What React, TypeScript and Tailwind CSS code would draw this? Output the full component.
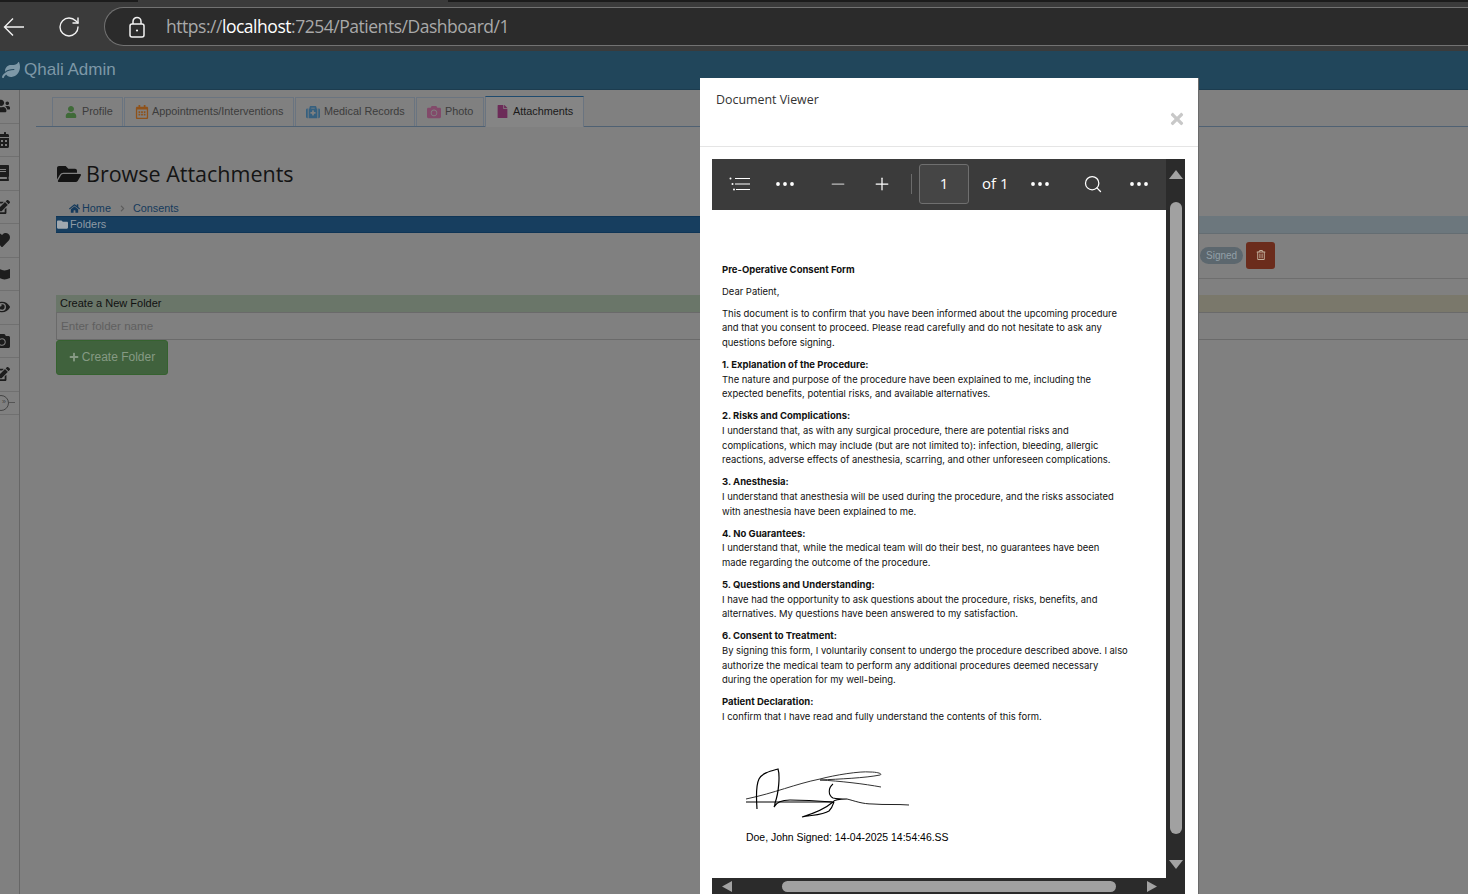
import { RotateCw, Minus, Plus, Search, Ellipsis } from "lucide-react";
import {
  FaLeaf, FaUser, FaUsers, FaRegCalendarAlt, FaCalendarAlt, FaMedkit, FaCamera, FaFile, FaFolderOpen, FaFolder,
  FaHome, FaPlus, FaRegTrashAlt, FaTimes, FaEdit, FaHeart, FaEye, FaBook, FaChevronRight,
} from "react-icons/fa";

function MapBlob({ className }: { className?: string }) {
  return (
    <svg viewBox="0 0 16 16" className={className} fill="currentColor">
      <path d="M0 4 C3 2 5 3 8 4 C11 5 13 4 16 3 V12 C13 13 11 14 8 13 C5 12 3 11 0 13 Z" />
    </svg>
  );
}

const tabs = [
  { label: "Profile", icon: FaUser, color: "text-[#3f6a38]", cls: "w-[71px] pl-[12px]", iconCls: "mr-[5px] size-[12px]" },
  { label: "Appointments/Interventions", icon: FaRegCalendarAlt, color: "text-[#8f521a]", cls: "w-[170px] pl-[10px]", iconCls: "mr-[3px] size-[14px]" },
  { label: "Medical Records", icon: FaMedkit, color: "text-[#36607f]", cls: "w-[120px] pl-[10px]", iconCls: "mr-[4px] size-[14px]" },
  { label: "Photo", icon: FaCamera, color: "text-[#824a6a]", cls: "w-[68px] pl-[10px]", iconCls: "mr-[4px] size-[14px]" },
];

const sideIcons = [FaUsers, FaCalendarAlt, FaBook, FaEdit, FaHeart, MapBlob, FaEye, FaCamera, FaEdit];

type Para = { heading?: string; lines: string[] };

const paragraphs: Para[] = [
  { lines: ["Dear Patient,"] },
  {
    lines: [
      "This document is to confirm that you have been informed about the upcoming procedure",
      "and that you consent to proceed. Please read carefully and do not hesitate to ask any",
      "questions before signing.",
    ],
  },
  {
    heading: "1. Explanation of the Procedure:",
    lines: [
      "The nature and purpose of the procedure have been explained to me, including the",
      "expected benefits, potential risks, and available alternatives.",
    ],
  },
  {
    heading: "2. Risks and Complications:",
    lines: [
      "I understand that, as with any surgical procedure, there are potential risks and",
      "complications, which may include (but are not limited to): infection, bleeding, allergic",
      "reactions, adverse effects of anesthesia, scarring, and other unforeseen complications.",
    ],
  },
  {
    heading: "3. Anesthesia:",
    lines: [
      "I understand that anesthesia will be used during the procedure, and the risks associated",
      "with anesthesia have been explained to me.",
    ],
  },
  {
    heading: "4. No Guarantees:",
    lines: [
      "I understand that, while the medical team will do their best, no guarantees have been",
      "made regarding the outcome of the procedure.",
    ],
  },
  {
    heading: "5. Questions and Understanding:",
    lines: [
      "I have had the opportunity to ask questions about the procedure, risks, benefits, and",
      "alternatives. My questions have been answered to my satisfaction.",
    ],
  },
  {
    heading: "6. Consent to Treatment:",
    lines: [
      "By signing this form, I voluntarily consent to undergo the procedure described above. I also",
      "authorize the medical team to perform any additional procedures deemed necessary",
      "during the operation for my well-being.",
    ],
  },
  {
    heading: "Patient Declaration:",
    lines: ["I confirm that I have read and fully understand the contents of this form."],
  },
];

function BrowserBar() {
  return (
    <div className="flex h-[51px] shrink-0 flex-col bg-[#3b3b3b]">
      <div className="flex h-[2px] shrink-0">
        <div className="w-[138px] bg-[#1c1c1c]" />
        <div className="ml-[310px] flex-1 bg-[#1c1c1c]" />
      </div>
      <div className="flex flex-1 items-center pb-[1px] pl-[3px] pt-[1px]">
        <svg viewBox="0 0 22 20" className="h-[20px] w-[22px] text-[#f2f2f2]" fill="none" stroke="currentColor" strokeWidth="1.4">
          <path d="M21 10H1.5M10 1.5L1.5 10L10 18.5" />
        </svg>
        <RotateCw className="ml-[32px] size-[24px] text-[#f2f2f2]" strokeWidth={1.4} />
        <div className="ml-[23px] flex h-[39px] flex-1 items-center rounded-l-[20px] border border-r-0 border-[#727272] bg-[#2b2b2b] pl-[24px] font-['Open_Sans',sans-serif] text-[17.5px] tracking-[-0.47px] text-[#a9a9a9]">
          <svg viewBox="0 0 16 22" className="h-[22px] w-[16px] text-[#f2f2f2]" fill="none" stroke="currentColor" strokeWidth="1.5">
            <path d="M4 8V5.5C4 3.2 5.8 1.5 8 1.5C10.2 1.5 12 3.2 12 5.5V8" />
            <rect x="1" y="8" width="14" height="13" rx="2" />
            <circle cx="8" cy="14.5" r="1.1" fill="currentColor" stroke="none" />
          </svg>
          <span className="ml-[21px]">
            https://<span className="text-white">localhost</span>:7254/Patients/Dashboard/1
          </span>
        </div>
      </div>
    </div>
  );
}

function Sidebar() {
  return (
    <div className="w-[20px] shrink-0 overflow-hidden border-r border-[#666]">
      {sideIcons.map((Icon, i) => (
        <div key={i} className="flex h-[33.5px] items-center border-b border-[#707070]">
          <Icon className={i === 0 ? "ml-[-8px] size-[18px] shrink-0 text-[#1d1d1d]" : "ml-[-6px] size-[16px] shrink-0 text-[#1d1d1d]"} />
        </div>
      ))}
      <div className="flex h-[23px] items-center border-b border-[#707070]">
        <div className="ml-[-7px] flex size-[16px] shrink-0 items-center justify-center rounded-full border border-[#444] pl-[6px] text-[7px] text-[#444]">»</div>
        <div className="h-px w-[6px] bg-[#555]" />
      </div>
    </div>
  );
}

function Tabs() {
  return (
    <div className="ml-[16px] mt-[7px] flex h-[30px] items-end gap-px border-b border-[#4f6173] pl-[16px]">
      {tabs.map(t => (
        <div key={t.label} className={`flex h-[29px] items-center border border-b-0 border-[#6a7480] pb-[1px] text-[10.85px] text-[#3c3c3c] ${t.cls}`}>
          <t.icon className={`shrink-0 ${t.iconCls} ${t.color}`} />
          <span className="whitespace-nowrap">{t.label}</span>
        </div>
      ))}
      <div className="mb-[-1px] flex h-[31px] w-[99px] items-center border border-b-0 border-[#6a7480] border-t-[#1f4b6e] bg-[#858585] pb-[2px] pl-[10px] text-[10.85px] text-[#1a1a1a]">
        <FaFile className="mr-[4px] size-[13px] shrink-0 text-[#6c2b58]" />
        Attachments
      </div>
    </div>
  );
}

function PageBehind() {
  return (
    <div className="min-w-0 flex-1">
      <Tabs />
      <div className="ml-[36px] mt-[32px] flex items-center font-['Open_Sans',sans-serif] text-[#141414]">
        <FaFolderOpen className="ml-px size-[24px]" />
        <h1 className="ml-[5px] text-[21.5px] leading-[30px]">Browse Attachments</h1>
      </div>
      <div className="ml-[49px] mt-[12px] flex h-[14px] items-center text-[10.85px] text-[#153a5c]">
        <FaHome className="mr-[2px] size-[11px]" />
        Home
        <FaChevronRight className="ml-[8px] mr-[7px] size-[7px] text-[#5c5c5c]" />
        Consents
      </div>
      <div className="ml-[36px] mt-px grid grid-cols-2">
        <div className="h-[62px]">
          <div className="flex h-[17px] items-center border-y border-[#0f3556] bg-[#173e5f] text-[10.85px] text-[#8f9ba6]">
            <FaFolder className="mx-[2px] ml-px size-[11px] text-[#a0a8af]" />
            Folders
          </div>
        </div>
        <div className="h-[62px]">
          <div className="h-[18px] border-b border-[#646d72] bg-[#6c777d]" />
          <div className="flex h-[45px] items-center border-b border-[#6e6e6e] pb-[2px] pl-[438px]">
            <span className="rounded-full bg-[#5c676e] px-[6px] py-px text-[10px] text-[#93a0a8]">Signed</span>
            <span className="ml-[3px] flex h-[27px] w-[29px] items-center justify-center rounded-[3px] bg-[#6b2c1c] text-[#c2ae9a]">
              <FaRegTrashAlt className="size-[10px]" />
            </span>
          </div>
        </div>
        <div className="mt-[17px]">
          <div className="flex h-[17px] items-center bg-[#6a7669] pl-[4px] text-[11px] text-[#111]">Create a New Folder</div>
          <div className="flex h-[28px] items-center border border-[#6a6a6a] pl-[4px] text-[11.6px] text-[#5f5f5f]">Enter folder name</div>
          <div className="flex h-[35px] w-[112px] items-center justify-center rounded-[3px] border border-[#35622f] bg-[#40623d] pb-[2px] text-[12px] text-[#869a84]">
            <FaPlus className="mr-[3px] size-[10px]" />
            Create Folder
          </div>
        </div>
        <div className="mt-[17px]">
          <div className="h-[17px] bg-[#7a786b]" />
          <div className="h-[28px] border-y border-[#6a6a6a]" />
        </div>
      </div>
    </div>
  );
}

function Signature() {
  return (
    <svg viewBox="745 766 170 56" className="ml-[23px] mt-[41px] h-[56px] w-[170px]" fill="none">
      <path d="M746 799 C775 793 795 784 820 779 C835 775 860 771 870 772 C878 772 883 774 880 775 C865 778 840 779 820 780 C840 781 865 784 881 787" stroke="#333" strokeWidth="1" />
      <path d="M757 809 C756 795 756 785 759 779 C762 773 771 771 778 769 C780 775 779 792 775 803 C775 806 774 807 774 807 C776 803 780 800 790 800 C805 800 820 801 833 802" stroke="#000" strokeWidth="1.2" />
      <path d="M746 802 H832" stroke="#000" strokeWidth="1.1" />
      <path d="M833 784 C828 788 828 795 833 798 C838 799 843 799 847 799 C838 799 834 800 833 802 C826 808 812 814 802 817 C812 815 823 815 829 811 C832 808 833 805 834 802" stroke="#000" strokeWidth="1.1" />
      <path d="M847 799 C855 801 862 804 873 804 C885 805 897 804 909 805" stroke="#222" strokeWidth="1" />
    </svg>
  );
}

function PdfPage() {
  return (
    <div className="min-h-0 flex-1 overflow-hidden bg-white pl-[10px] pt-[53px] font-['Inter',sans-serif] text-[9.43px] leading-[14.7px] text-[#111]">
      <div className="whitespace-nowrap text-[9.5px] font-bold">Pre-Operative Consent Form</div>
      {paragraphs.map((p, i) => (
        <div key={i} className="mt-[7.2px] whitespace-nowrap">
          {p.heading && <div className="text-[9.5px] font-bold">{p.heading}</div>}
          {p.lines.map(line => (
            <div key={line}>{line}</div>
          ))}
        </div>
      ))}
      <Signature />
      <div className="ml-[24px] mt-[9px] whitespace-nowrap font-['Liberation_Sans',sans-serif] text-[10.45px] leading-[14px] text-black">
        Doe, John Signed: 14-04-2025 14:54:46.SS
      </div>
    </div>
  );
}

function PdfToolbar() {
  return (
    <div className="flex h-[51px] shrink-0 items-center bg-[#3b3b3b] pb-[2px] text-white">
      <span className="flex w-[56px] justify-center">
        <svg viewBox="0 0 22 14" className="h-[14px] w-[22px]" stroke="currentColor" fill="currentColor">
          <path d="M6 1.5H21M6 7H21M7 12.5H21" strokeWidth="1.2" />
          <circle cx="1.5" cy="1.5" r="1" stroke="none" />
          <circle cx="3.5" cy="7" r="1" stroke="none" />
          <circle cx="5" cy="12.5" r="1" stroke="none" />
        </svg>
      </span>
      <Ellipsis className="ml-[5px] size-[24px]" strokeWidth={1.8} />
      <Minus className="ml-[31px] size-[20px] text-[#bdbdbd]" strokeWidth={1.5} />
      <Plus className="ml-[24px] size-[20px]" strokeWidth={1.5} />
      <div className="ml-[19px] h-[20px] w-px bg-[#6b6b6b]" />
      <div className="ml-[7px] flex h-[40px] w-[50px] items-center justify-center rounded-[3px] border border-[#6f6f6f] bg-[#454545] font-['Open_Sans',sans-serif] text-[15px]">1</div>
      <span className="ml-[13px] w-[26px] whitespace-nowrap font-['Open_Sans',sans-serif] text-[15px]">of 1</span>
      <Ellipsis className="ml-[20px] size-[24px]" strokeWidth={1.8} />
      <Search className="ml-[31px] size-[20px]" strokeWidth={1.5} />
      <Ellipsis className="ml-[24px] size-[24px]" strokeWidth={1.8} />
    </div>
  );
}

function Triangle({ dir }: { dir: "up" | "down" | "left" | "right" }) {
  const points = { up: "0,12 6,0 12,12", down: "0,0 12,0 6,12", left: "12,0 12,12 0,6", right: "0,0 0,12 12,6" }[dir];
  const size = dir === "up" || dir === "down" ? "h-[9px] w-[14px]" : "h-[11px] w-[10px]";
  return (
    <svg viewBox="0 0 12 12" className={`shrink-0 ${size}`} preserveAspectRatio="none">
      <polygon points={points} fill="#a3a3a3" />
    </svg>
  );
}

function Modal() {
  return (
    <div className="absolute left-[700px] top-[78px] flex h-[816px] w-[498px] flex-col bg-white shadow-[1px_0_0_#6a6a6a]">
      <div className="relative h-[69px] shrink-0 border-b border-[#e5e5e5] pl-[16px] pt-[12px] font-['Open_Sans',sans-serif] text-[12.4px] leading-[19px] text-[#333]">
        Document Viewer
        <FaTimes className="absolute right-[12px] top-[32px] size-[18px] text-[#c8c8c8]" />
      </div>
      <div className="ml-[12px] mt-[12px] flex min-h-0 w-[473px] flex-1 flex-col bg-[#2b2b2b]">
        <div className="flex min-h-0 flex-1">
          <div className="flex w-[454px] flex-col">
            <PdfToolbar />
            <PdfPage />
          </div>
          <div className="flex w-[19px] flex-col items-center pt-[11px]">
            <Triangle dir="up" />
            <div className="mt-[23px] h-[632px] w-[12px] shrink-0 rounded-full bg-[#a1a1a1]" />
            <div className="mt-[26px]">
              <Triangle dir="down" />
            </div>
          </div>
        </div>
        <div className="flex h-[16px] shrink-0 items-center pl-[10px]">
          <Triangle dir="left" />
          <div className="ml-[50px] h-[11px] w-[334px] rounded-full bg-[#a1a1a1]" />
          <div className="ml-[31px]">
            <Triangle dir="right" />
          </div>
        </div>
      </div>
    </div>
  );
}

export default function App() {
  return (
    <div className="relative flex h-[894px] w-[1468px] flex-col overflow-hidden bg-[#808080] font-['Liberation_Sans',sans-serif]">
      <BrowserBar />
      <div className="flex h-[39px] shrink-0 items-center border-b border-[#1c3c4f] bg-[#21465b] pl-[2px] text-[17px] text-[#7e98a7]">
        <FaLeaf className="mr-[4px] size-[18px]" />
        Qhali Admin
      </div>
      <div className="flex min-h-0 flex-1">
        <Sidebar />
        <PageBehind />
      </div>
      <Modal />
    </div>
  );
}
